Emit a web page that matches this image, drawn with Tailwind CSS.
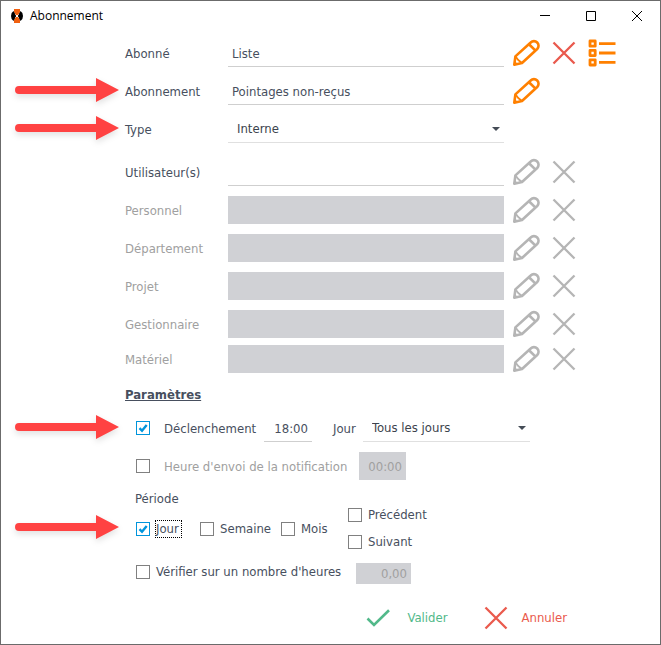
<!DOCTYPE html>
<html lang="fr">

<head>
  <meta charset="UTF-8" />
  <meta name="viewport" content="width=device-width, initial-scale=1.0" />
  <script src="https://cdn.jsdelivr.net/npm/@tailwindcss/browser@4"></script>
  <title>Abonnement</title>
</head>

<body class="bg-white">
  <!-- shared icons -->
  <svg class="hidden">
    <symbol id="pencil" viewBox="0 0 28 28">
      <g fill="none" stroke="currentColor" stroke-width="2.6" stroke-linejoin="round">
        <path d="M3.4 17.4 18.7 3.500a4.500 4.500 0 0 1 6.500 6.500L10 24 2.300 25.700z" />
        <path d="M17 5.200 23.500 11.600" />
        <path d="M3.400 17.400l2.800 3.600 3.800 3" stroke-width="1.800" />
        <path d="M2.300 25.700l.5-3.200 2.600 2.600z" fill="currentColor" stroke-width="1" />
      </g>
    </symbol>
    <symbol id="cross" viewBox="0 0 28 28">
      <path d="M3.5 3.5 24.5 24.5M24.5 3.5 3.5 24.5" fill="none" stroke="currentColor" stroke-width="2.3" />
    </symbol>
    <symbol id="list" viewBox="0 0 28 28">
      <g fill="none" stroke="currentColor" stroke-width="2.8">
        <path d="M2 2h5.2v5.2H2zM2 11.4h5.2v5.2H2zM2 20.8h5.2v5.2H2z" stroke-linejoin="round" />
        <path d="M11 4.7h16.500M11 14h16.500M11 23.3h16.500" />
      </g>
    </symbol>
    <symbol id="arrow" viewBox="0 0 106 24">
      <path d="M5 8H82V0L105 12 82 24V16H5a4 4 0 0 1 0-8z" fill="#ff4242" />
    </symbol>
    <symbol id="caret" viewBox="0 0 8 4">
      <path d="M0 0h8L4 4z" fill="#444c56" />
    </symbol>
    <symbol id="tick" viewBox="0 0 14 14">
      <path d="M3.5 7.2 6 9.8 10.7 4" fill="none" stroke="#0095dc" stroke-width="2.4" />
    </symbol>
  </svg>

  <div
    class="min-h-screen flex flex-col border border-[#6b6b6b] font-['DejaVu_Sans_Condensed','DejaVu_Sans',sans-serif] text-[13px] leading-4 text-[#474f5e]">
    <header class="flex items-center h-[30px] pl-2.5 text-black">
      <svg class="w-3 h-3.5" viewBox="0 0 12 14">
        <path d="M3 0h6v3L7 7l2 4v3H3v-3l2-4-2-4z" fill="#f06010" />
        <path d="M2.5 2 5.2 7 2.5 12Q0 10.500 0 7T2.500 2zM9.500 2Q12 3.500 12 7T9.500 12L6.800 7z" fill="#000" />
        <path d="M4.500 5.500l3 3M7.500 5.500l-3 3" stroke="#fff" />
      </svg>
      <h1 class="ml-[7px] text-xs font-['Open_Sans',sans-serif]">Abonnement</h1>
      <div class="ml-auto flex h-full">
        <button type="button" aria-label="Réduire" class="w-[46px] flex items-center justify-center">
          <svg class="w-2.5 h-2.5" viewBox="0 0 10 10"><path d="M0 4.500h10" stroke="#000" /></svg>
        </button>
        <button type="button" aria-label="Agrandir" class="w-[46px] flex items-center justify-center">
          <svg class="w-2.5 h-2.5" viewBox="0 0 10 10"><path d="M.5.5h9v9h-9z" fill="none" stroke="#000" /></svg>
        </button>
        <button type="button" aria-label="Fermer" class="w-[46px] flex items-center justify-center">
          <svg class="w-2.5 h-2.5" viewBox="0 0 10 10"><path d="M0 0l10 10M10 0 0 10" stroke="#000" /></svg>
        </button>
      </div>
    </header>

    <form class="pl-[124px] pt-2 pb-3">
      <div class="flex flex-col gap-2.5">
        <div class="flex items-center h-7">
          <label for="abonne" class="w-[103px] pt-px">Abonné</label>
          <input id="abonne" type="text" value="Liste" class="flex-1 min-w-0 h-7 px-1 pt-0.5 border-b border-[#cfcfcf]" />
          <div class="w-[156px] pl-2 flex gap-2.5 text-[#ff8000]">
            <button type="button" aria-label="Modifier"><svg class="w-7 h-7"><use href="#pencil" /></svg></button>
            <button type="button" aria-label="Effacer" class="text-[#e9594d]"><svg class="w-7 h-7"><use href="#cross" /></svg></button>
            <button type="button" aria-label="Liste"><svg class="w-7 h-7"><use href="#list" /></svg></button>
          </div>
        </div>

        <div class="relative flex items-center h-7">
          <svg class="absolute -left-[111px] top-px w-[106px] h-6 overflow-visible drop-shadow-md"><use href="#arrow" /></svg>
          <label for="abonnement" class="w-[103px] pt-px">Abonnement</label>
          <input id="abonnement" type="text" value="Pointages non-reçus" class="flex-1 min-w-0 h-7 px-1 pt-0.5 border-b border-[#cfcfcf]" />
          <div class="w-[156px] pl-2 flex text-[#ff8000]">
            <button type="button" aria-label="Modifier"><svg class="w-7 h-7"><use href="#pencil" /></svg></button>
          </div>
        </div>

        <div class="relative flex items-center h-7">
          <svg class="absolute -left-[111px] top-px w-[106px] h-6 overflow-visible drop-shadow-md"><use href="#arrow" /></svg>
          <label for="type" class="w-[103px] pt-px">Type</label>
          <div class="relative flex-1">
            <select id="type" class="block appearance-none w-full h-7 pl-[9px] border-b border-[#e0e0e0] text-[#3c434d]">
              <option>Interne</option>
            </select>
            <svg class="absolute right-1 top-3 w-2 h-1 pointer-events-none"><use href="#caret" /></svg>
          </div>
          <div class="w-[156px]"></div>
        </div>
      </div>

      <div class="mt-[15px] flex flex-col gap-2.5 text-[#a0a0a0]">
        <div class="flex items-center h-7">
          <label for="utilisateurs" class="w-[103px] pt-px text-[#474f5e]">Utilisateur(s)</label>
          <input id="utilisateurs" type="text" class="flex-1 min-w-0 h-7 px-1 border-b border-[#cfcfcf]" />
          <div class="w-[156px] pl-2 flex gap-2.5 text-[#b5b5b5]">
            <button type="button" aria-label="Modifier"><svg class="w-7 h-7"><use href="#pencil" /></svg></button>
            <button type="button" aria-label="Effacer"><svg class="w-7 h-7"><use href="#cross" /></svg></button>
          </div>
        </div>
        <div class="flex items-center h-7">
          <label for="personnel" class="w-[103px] pt-px">Personnel</label>
          <input id="personnel" type="text" disabled class="flex-1 min-w-0 h-7 px-1 bg-[#d0d1d5]" />
          <div class="w-[156px] pl-2 flex gap-2.5 text-[#b5b5b5]">
            <button type="button" aria-label="Modifier"><svg class="w-7 h-7"><use href="#pencil" /></svg></button>
            <button type="button" aria-label="Effacer"><svg class="w-7 h-7"><use href="#cross" /></svg></button>
          </div>
        </div>
        <div class="flex items-center h-7">
          <label for="departement" class="w-[103px] pt-px">Département</label>
          <input id="departement" type="text" disabled class="flex-1 min-w-0 h-7 px-1 bg-[#d0d1d5]" />
          <div class="w-[156px] pl-2 flex gap-2.5 text-[#b5b5b5]">
            <button type="button" aria-label="Modifier"><svg class="w-7 h-7"><use href="#pencil" /></svg></button>
            <button type="button" aria-label="Effacer"><svg class="w-7 h-7"><use href="#cross" /></svg></button>
          </div>
        </div>
        <div class="flex items-center h-7">
          <label for="projet" class="w-[103px] pt-px">Projet</label>
          <input id="projet" type="text" disabled class="flex-1 min-w-0 h-7 px-1 bg-[#d0d1d5]" />
          <div class="w-[156px] pl-2 flex gap-2.5 text-[#b5b5b5]">
            <button type="button" aria-label="Modifier"><svg class="w-7 h-7"><use href="#pencil" /></svg></button>
            <button type="button" aria-label="Effacer"><svg class="w-7 h-7"><use href="#cross" /></svg></button>
          </div>
        </div>
        <div class="flex items-center h-7">
          <label for="gestionnaire" class="w-[103px] pt-px">Gestionnaire</label>
          <input id="gestionnaire" type="text" disabled class="flex-1 min-w-0 h-7 px-1 bg-[#d0d1d5]" />
          <div class="w-[156px] pl-2 flex gap-2.5 text-[#b5b5b5]">
            <button type="button" aria-label="Modifier"><svg class="w-7 h-7"><use href="#pencil" /></svg></button>
            <button type="button" aria-label="Effacer"><svg class="w-7 h-7"><use href="#cross" /></svg></button>
          </div>
        </div>
      </div>
      <div class="mt-[7px] flex items-center h-7 text-[#a0a0a0]">
        <label for="materiel" class="w-[103px] pt-px">Matériel</label>
        <input id="materiel" type="text" disabled class="flex-1 min-w-0 h-7 px-1 bg-[#d0d1d5]" />
        <div class="w-[156px] pl-2 flex gap-2.5 text-[#b5b5b5]">
          <button type="button" aria-label="Modifier"><svg class="w-7 h-7"><use href="#pencil" /></svg></button>
          <button type="button" aria-label="Effacer"><svg class="w-7 h-7"><use href="#cross" /></svg></button>
        </div>
      </div>

      <h2 class="mt-3 leading-5 font-bold underline">Paramètres</h2>

      <div class="relative mt-[9px] pl-[11px] flex items-center h-7">
        <svg class="absolute -left-[111px] top-px w-[106px] h-6 overflow-visible drop-shadow-md"><use href="#arrow" /></svg>
        <span class="relative w-7 h-3.5">
          <input id="declenchement" type="checkbox" checked class="peer block appearance-none w-3.5 h-3.5 border border-[#808080] checked:border-[#0095dc]" />
          <svg class="absolute left-0 top-0 w-3.5 h-3.5 hidden peer-checked:block pointer-events-none"><use href="#tick" /></svg>
        </span>
        <label for="declenchement" class="w-[100px] pt-px">Déclenchement</label>
        <input type="text" value="18:00" aria-label="Heure de déclenchement" class="w-12 h-7 pr-1 pt-0.5 text-right border-b border-[#cfcfcf]" />
        <label for="jours" class="ml-[21px] w-[30px] pt-px">Jour</label>
        <div class="relative w-[167px]">
          <select id="jours" class="block appearance-none w-full h-7 pl-[9px] border-b border-[#e0e0e0] text-[#3c434d]">
            <option>Tous les jours</option>
          </select>
          <svg class="absolute right-1 top-3 w-2 h-1 pointer-events-none"><use href="#caret" /></svg>
        </div>
      </div>

      <div class="mt-2.5 pl-[11px] flex items-center h-7 text-[#a0a0a0]">
        <span class="w-7 h-3.5">
          <input id="envoi" type="checkbox" class="block appearance-none w-3.5 h-3.5 border border-[#808080]" />
        </span>
        <label for="envoi" class="w-[195px] pt-px whitespace-nowrap">Heure d'envoi de la notification</label>
        <input type="text" value="00:00" disabled aria-label="Heure d'envoi" class="w-[47px] h-7 pr-1 text-right bg-[#d0d1d5]" />
      </div>

      <fieldset class="mt-[11px] pl-2.5">
        <legend class="float-left w-full">Période</legend>
        <div class="relative clear-both pt-px pl-px flex items-center">
          <svg class="absolute -left-[121px] top-2 w-[106px] h-6 overflow-visible drop-shadow-md"><use href="#arrow" /></svg>
          <div class="relative flex items-center w-16">
            <input id="jour" type="checkbox" checked class="peer block appearance-none w-3.5 h-3.5 border border-[#808080] checked:border-[#0095dc]" />
            <svg class="absolute left-0 top-0.5 w-3.5 h-3.5 hidden peer-checked:block pointer-events-none"><use href="#tick" /></svg>
            <label for="jour" class="ml-[5px] pr-0.5 border border-dotted border-black">Jour</label>
          </div>
          <div class="flex items-center gap-1.5 w-[81px]">
            <input id="semaine" type="checkbox" class="appearance-none w-3.5 h-3.5 border border-[#808080]" />
            <label for="semaine">Semaine</label>
          </div>
          <div class="flex items-center gap-1.5 w-[67px]">
            <input id="mois" type="checkbox" class="appearance-none w-3.5 h-3.5 border border-[#808080]" />
            <label for="mois">Mois</label>
          </div>
          <div class="flex flex-col gap-[13px]">
            <div class="flex items-center gap-1.5 h-3.5">
              <input id="precedent" type="checkbox" class="appearance-none w-3.5 h-3.5 border border-[#808080]" />
              <label for="precedent">Précédent</label>
            </div>
            <div class="flex items-center gap-1.5 h-3.5">
              <input id="suivant" type="checkbox" class="appearance-none w-3.5 h-3.5 border border-[#808080]" />
              <label for="suivant">Suivant</label>
            </div>
          </div>
        </div>
      </fieldset>

      <div class="mt-3.5 pl-[11px] flex items-start">
        <div class="flex items-center gap-1.5 h-[18px] w-[220px]">
          <input id="verifier" type="checkbox" class="appearance-none w-3.5 h-3.5 border border-[#808080]" />
          <label for="verifier" class="whitespace-nowrap">Vérifier sur un nombre d'heures</label>
        </div>
        <input type="text" value="0,00" disabled aria-label="Nombre d'heures" class="w-[55px] h-[21px] pr-1 text-right bg-[#d0d1d5] text-[#a0a0a0]" />
      </div>

      <div class="mt-5 pr-[93px] flex justify-end gap-[34px]">
        <button type="submit" class="flex items-center gap-3.5 text-[#52b98a]">
          <svg class="w-7 h-7" viewBox="0 0 28 28"><path d="M2.500 14.500 9 21 24 6.300" fill="none" stroke="currentColor" stroke-width="2.600" /></svg>
          Valider
        </button>
        <button type="button" class="flex items-center gap-3 text-[#ea5a4d]">
          <svg class="w-7 h-7"><use href="#cross" /></svg>
          Annuler
        </button>
      </div>
    </form>
  </div>
</body>

</html>
